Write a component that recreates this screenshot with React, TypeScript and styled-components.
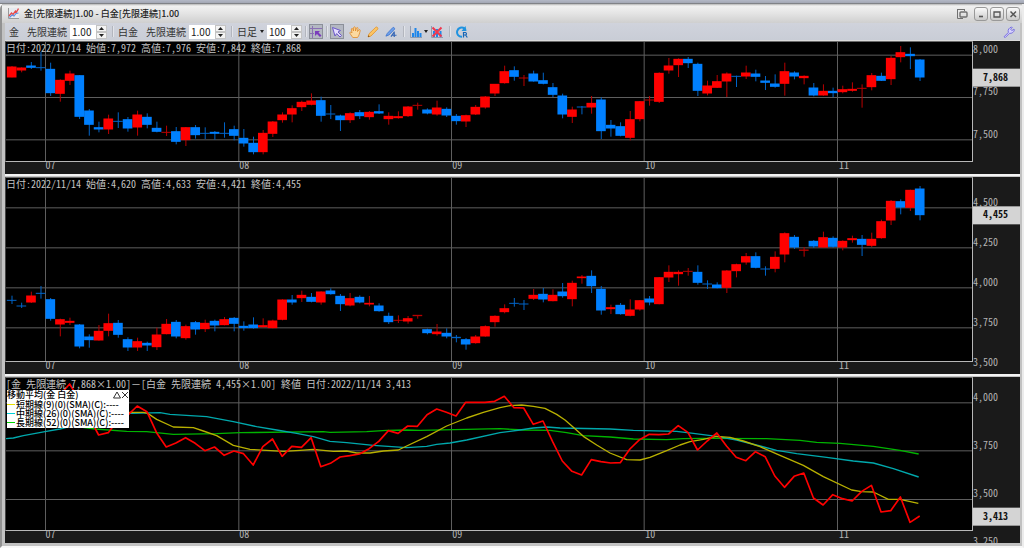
import React from "react";
import styled, { createGlobalStyle, css } from "styled-components";

const UI_FONT = `"Liberation Sans Narrow", "Noto Sans CJK JP", sans-serif`;
const MONO_FONT = `"Noto Sans Mono CJK JP", "Noto Sans CJK JP", monospace`;

const Global = createGlobalStyle`
  *, *::before, *::after { box-sizing: border-box; }
  body { margin: 0; background: #f4f4f4; font-family: ${UI_FONT}; font-size: 10px; color: #222; }
  button, input, select { font: inherit; color: inherit; }
`;

/* ---------- chart data ---------- */

type Candle = [up: 0 | 1, high: number, top: number, bottom: number, low: number];

const GOLD: Candle[] = [
  [1, 78, 80, 112, 112], [1, 82, 83, 91, 97], [0, 66, 77, 83, 87], [0, 36, 82, 84, 92], [0, 68, 87, 159, 168],
  [1, 118, 120, 161, 185], [1, 92, 101, 122, 135], [0, 105, 106, 230, 237], [0, 207, 212, 254, 287], [0, 245, 262, 268, 277],
  [1, 224, 236, 268, 282], [0, 217, 243, 245, 264], [0, 231, 238, 265, 275], [1, 212, 224, 262, 287], [0, 220, 231, 254, 265],
  [0, 245, 264, 275, 277], [1, 257, 276, 278, 288], [0, 261, 274, 305, 313], [1, 261, 262, 300, 318], [0, 255, 262, 285, 296],
  [0, 262, 279, 281, 297], [0, 273, 276, 281, 299], [0, 247, 279, 281, 293], [0, 257, 268, 287, 301], [0, 267, 294, 310, 320],
  [0, 290, 309, 336, 343], [1, 270, 279, 336, 343], [1, 243, 245, 281, 291], [1, 217, 224, 240, 248], [1, 196, 205, 223, 247],
  [1, 182, 186, 201, 213], [1, 160, 182, 194, 196], [0, 170, 181, 227, 245], [0, 195, 221, 223, 237], [0, 224, 227, 240, 273],
  [1, 217, 220, 240, 249], [0, 210, 217, 228, 237], [1, 213, 216, 231, 239], [0, 193, 214, 220, 222], [1, 217, 228, 237, 254],
  [1, 214, 229, 234, 236], [1, 198, 200, 228, 231], [1, 188, 195, 197, 209], [0, 205, 209, 220, 223], [1, 182, 203, 223, 227],
  [0, 202, 207, 226, 231], [0, 222, 228, 243, 254], [1, 224, 226, 244, 261], [1, 195, 201, 223, 225], [1, 168, 170, 202, 206],
  [1, 132, 132, 160, 168], [1, 77, 94, 129, 131], [0, 79, 91, 110, 122], [1, 105, 113, 115, 138], [0, 92, 101, 124, 125],
  [0, 98, 121, 131, 133], [0, 129, 142, 164, 171], [0, 161, 167, 223, 235], [1, 200, 209, 230, 249], [0, 198, 200, 202, 223],
  [1, 168, 189, 202, 221], [0, 172, 179, 273, 297], [0, 240, 255, 265, 290], [0, 247, 259, 287, 289], [1, 213, 238, 293, 301],
  [1, 183, 184, 237, 244], [1, 168, 179, 181, 197], [1, 97, 99, 185, 189], [1, 54, 77, 91, 101], [1, 55, 57, 75, 111],
  [0, 51, 57, 69, 84], [0, 68, 72, 152, 168], [1, 122, 137, 160, 166], [1, 105, 124, 143, 144], [1, 97, 101, 124, 171],
  [0, 107, 108, 110, 141], [1, 77, 98, 109, 117], [0, 89, 101, 110, 124], [0, 108, 122, 128, 150], [0, 103, 131, 140, 143],
  [1, 68, 94, 131, 167], [0, 94, 98, 109, 118], [1, 106, 108, 114, 133], [0, 129, 143, 166, 169], [1, 133, 153, 166, 167],
  [0, 143, 153, 159, 171], [1, 137, 148, 156, 160], [1, 127, 147, 152, 155], [1, 133, 144, 146, 203], [1, 99, 106, 141, 151],
  [0, 98, 108, 122, 123], [1, 48, 54, 117, 135], [1, 18, 37, 51, 67], [0, 22, 42, 48, 87], [0, 57, 59, 112, 123],
];

const PLATINUM: Candle[] = [
  [0, 362, 375, 377, 387], [0, 383, 392, 394, 399], [1, 350, 362, 382, 384], [0, 333, 354, 356, 371], [0, 369, 373, 431, 437],
  [1, 431, 433, 448, 484], [1, 428, 438, 443, 450], [0, 447, 449, 514, 520], [0, 478, 485, 495, 518], [1, 450, 468, 496, 497],
  [1, 416, 445, 467, 484], [0, 435, 444, 479, 488], [0, 487, 493, 517, 528], [1, 488, 499, 517, 528], [0, 500, 504, 511, 528],
  [1, 458, 479, 516, 525], [1, 432, 447, 477, 478], [0, 435, 441, 484, 490], [1, 449, 454, 489, 494], [0, 438, 442, 463, 479],
  [1, 434, 444, 462, 471], [0, 434, 438, 451, 469], [1, 426, 433, 450, 451], [0, 426, 429, 446, 469], [0, 439, 453, 459, 467],
  [0, 427, 449, 459, 461], [1, 430, 451, 456, 458], [1, 434, 437, 459, 460], [1, 373, 374, 434, 436], [0, 360, 374, 382, 389],
  [1, 347, 360, 369, 381], [0, 354, 366, 380, 382], [1, 349, 350, 382, 389], [0, 340, 347, 357, 359], [0, 357, 363, 387, 408],
  [1, 354, 370, 391, 394], [0, 361, 366, 382, 385], [1, 363, 384, 388, 394], [0, 385, 392, 408, 410], [0, 413, 423, 441, 447],
  [1, 421, 435, 437, 444], [1, 423, 430, 439, 446], [1, 420, 420, 423, 431], [0, 461, 463, 474, 478], [1, 447, 470, 477, 482],
  [0, 460, 474, 484, 490], [0, 480, 486, 489, 502], [0, 489, 493, 508, 524], [1, 480, 485, 504, 506], [1, 451, 454, 484, 485],
  [1, 421, 423, 441, 455], [1, 388, 400, 411, 415], [0, 369, 384, 386, 395], [0, 375, 386, 388, 405], [1, 342, 360, 371, 375],
  [0, 339, 357, 373, 382], [1, 343, 360, 378, 379], [0, 324, 350, 363, 368], [1, 317, 324, 372, 394], [1, 300, 305, 309, 326],
  [0, 286, 303, 333, 354], [0, 333, 342, 406, 419], [1, 389, 397, 402, 417], [0, 384, 390, 417, 419], [1, 373, 404, 422, 424],
  [1, 375, 376, 403, 407], [0, 363, 371, 382, 391], [1, 306, 307, 387, 388], [1, 271, 291, 307, 321], [1, 286, 291, 297, 332],
  [1, 279, 288, 290, 302], [0, 271, 291, 323, 329], [0, 316, 326, 328, 342], [0, 322, 329, 339, 340], [1, 285, 287, 338, 354],
  [1, 266, 268, 288, 307], [1, 234, 244, 262, 269], [0, 232, 244, 278, 280], [0, 274, 281, 283, 302], [1, 229, 246, 281, 292],
  [1, 172, 175, 238, 262], [0, 180, 186, 217, 222], [1, 216, 224, 227, 245], [0, 195, 198, 214, 219], [1, 170, 187, 217, 219],
  [0, 184, 189, 215, 218], [1, 196, 198, 217, 226], [1, 182, 190, 195, 203], [0, 180, 192, 209, 243], [1, 173, 192, 212, 216],
  [1, 134, 139, 189, 191], [1, 75, 78, 136, 150], [0, 73, 79, 97, 118], [1, 44, 45, 98, 108], [0, 33, 41, 120, 136],
];

/* Closing spread, one value per session starting at the sixth. */
const SPREAD_FROM = 5;
const SPREAD = [
  75, 42, 90, 140, 195, 188, 150, 136, 108, 125, 188, 231, 219, 203, 220, 242, 231, 256, 243, 251, 285, 230, 207, 259,
  229, 232, 203, 290, 280, 261, 257, 252, 236, 214, 182, 190, 168, 169, 134, 117, 127, 138, 97, 97, 97, 94, 79, 113,
  114, 163, 153, 215, 273, 304, 315, 269, 275, 279, 278, 237, 209, 193, 194, 192, 167, 187, 240, 213, 189, 228, 262,
  272, 245, 260, 318, 352, 319, 309, 384, 405, 374, 386, 393, 364, 346, 426, 422, 381, 457, 438,
];

const SMA_SHORT =
  "300,150 390,127 430,127 443,130 470,148 520,171 580,173 610,183 650,197 700,226 750,238 850,244 900,241 940,238 1000,244 1040,243 1070,249 1110,249 1150,243 1195,240 1220,228 1280,200 1340,168 1400,144 1450,127 1500,113 1530,107 1565,105 1600,109 1635,115 1670,133 1695,150 1720,172 1750,199 1790,225 1830,249 1880,269 1920,270 1950,262 2000,242 2040,225 2070,215 2110,208 2150,199 2190,202 2230,213 2280,230 2340,256 2410,286 2470,320 2555,360 2585,365 2620,366 2665,388 2700,388 2755,400";
const SMA_MIDDLE =
  "18,206 40,204 70,197 135,185 180,177 300,145 390,130 480,128 510,133 620,140 700,155 770,170 830,180 890,190 940,200 990,214 1040,218 1120,226 1220,233 1280,229 1310,223 1350,219 1400,210 1500,188 1560,180 1600,174 1640,171 1680,174 1830,177 1900,181 2030,184 2080,190 2150,199 2210,210 2280,228 2330,241 2390,251 2480,262 2560,273 2620,279 2680,296 2756,321";
const SMA_LONG =
  "200,165 285,177 380,184 440,185 520,193 650,191 720,188 970,185 990,187 1100,185 1160,181 1220,180 1260,181 1500,176 1570,180 1650,181 1700,188 1750,197 1830,201 1900,207 2000,209 2050,206 2110,205 2300,206 2400,211 2450,217 2520,220 2620,229 2700,241 2756,252";

const MONTHS = [
  { label: "07", x: 136 },
  { label: "08", x: 716 },
  { label: "09", x: 1354 },
  { label: "10", x: 1932 },
  { label: "11", x: 2512 },
];

/* Drawing space shared by the plots: three units to a pixel of the default window. */
const LEFT = 18;
const SPAN = 2898;
const UNIT = 3;
const FRAME = 14;
const center = (i: number) => 35 + i * 28.98;

/* ---------- window chrome ---------- */

const Desktop = styled.div`
  min-height: 100vh;
  display: flex;
  flex-direction: column;
  background: #f6f6f6;
`;

const BackStrip = styled.div`
  height: 4px;
  flex: none;
  background: linear-gradient(#b3b8c6, #a3a7b4);
  border-bottom: 1px solid #808287;
`;

const Window = styled.section`
  flex: 1;
  display: flex;
  flex-direction: column;
  border-left: 2px solid #929292;
  border-right: 2px solid #ececec;
  border-bottom: 2px solid #f8f8f8;
  border-top-left-radius: 5px;
`;

const TitleBar = styled.header`
  height: 19px;
  flex: none;
  display: flex;
  align-items: center;
  gap: 5px;
  padding: 0 2px 0 6px;
  background: linear-gradient(#b4b4b4 0, #f1f1f1 2px, #e4e4e4 50%, #cfcfcf);
`;

const Title = styled.h1`
  flex: 1;
  margin: 0;
  font-size: 9px;
  line-height: 16px;
  font-weight: 500;
  color: #222;
`;

const WindowButtons = styled.div`
  display: flex;
  gap: 2px;
`;

const WindowButton = styled.button<{ $flat?: boolean }>`
  width: 14px;
  height: 14px;
  padding: 0;
  display: grid;
  place-items: center;
  border-radius: 3px;
  border: 1px solid #999;
  background: linear-gradient(#fafafa, #cacaca);
  ${(p) =>
    p.$flat &&
    css`
      border-color: transparent;
      background: none;
      margin-right: 3px;
    `}
`;

const Body = styled.div`
  flex: 1;
  display: flex;
  flex-direction: column;
  border: solid #c2c2c2;
  border-width: 0 2px 3px 3px;
`;

const Toolbar = styled.div`
  height: 17px;
  flex: none;
  display: flex;
  align-items: center;
  padding: 0 4px;
  background: linear-gradient(#d0d3dc, #c9cdd6);
`;

const FieldLabel = styled.label`
  display: flex;
  align-items: center;
  gap: 8px;
  line-height: 16px;
  color: #333;
`;

const Spinner = styled.div`
  display: flex;
  height: 14px;
  margin-left: 3px;
`;

const SpinInput = styled.input<{ $narrow?: boolean }>`
  width: ${(p) => (p.$narrow ? 24 : 26)}px;
  padding: 0 2px;
  border: 0;
  background: #fff;
  line-height: 14px;
`;

const SpinButtons = styled.div`
  display: flex;
  flex-direction: column;
  width: 11px;
`;

const SpinButton = styled.button`
  flex: 1;
  padding: 0;
  display: grid;
  place-items: center;
  border: 1px solid #c4c4c4;
  background: #f3f3f3;
  min-height: 0;
`;

const Separator = styled.span<{ $tight?: boolean }>`
  width: 1px;
  height: 11px;
  margin: 0 ${(p) => (p.$tight ? 3 : 5)}px;
  background: #b3b6be;
  box-shadow: 1px 0 #e2e4e9;
`;

const PeriodPicker = styled.span`
  display: grid;
  align-items: center;
  width: 27px;

  > * {
    grid-area: 1 / 1;
  }
  > svg {
    justify-self: end;
    pointer-events: none;
  }
`;

const PeriodSelect = styled.select`
  appearance: none;
  width: 100%;
  padding: 0;
  border: 0;
  background: none;
  color: #333;
  line-height: 16px;
`;

const ToolButton = styled.button<{ $pressed?: boolean; $wide?: boolean }>`
  height: 15px;
  width: ${(p) => (p.$wide ? 20 : 14)}px;
  padding: 0;
  display: flex;
  align-items: center;
  justify-content: center;
  gap: 2px;
  border: 1px solid ${(p) => (p.$pressed ? "#8c9099" : "transparent")};
  background: ${(p) => (p.$pressed ? "#b4b8c2" : "none")};
`;

const Tools = styled.div<{ $gap: number }>`
  display: flex;
  gap: ${(p) => p.$gap}px;
`;

const Spacer = styled.span`
  flex: 1;
`;

/* ---------- chart panes ---------- */

const Panes = styled.main`
  flex: 1;
  display: flex;
  flex-direction: column;
  gap: 3px;
  border-top: 1px solid #dcdcdc;
  background: #c4c4c4;
`;

const Pane = styled.section<{ $weight: number }>`
  flex: ${(p) => p.$weight} 1 0;
  min-height: 90px;
  display: grid;
  grid-template-columns: 1fr 47px;
  grid-template-rows: 1fr 12px;
  background: #1a1a1a;
  box-shadow: 0 2px #f4f4f4;

  &:last-child {
    box-shadow: none;
  }
`;

const Plot = styled.div`
  display: grid;
  min-height: 0;
  border: solid #b8b8b8;
  border-width: 1px 1px 1px 0;
  border-top-color: #6a6a6a;
  border-left: 1px solid #444;
  background: #000;

  > * {
    grid-area: 1 / 1;
  }
`;

const Drawing = styled.svg`
  display: block;
  width: 100%;
  height: 100%;
  min-height: 0;
`;

const AxisX = styled.svg`
  grid-column: 1;
  grid-row: 2;
  width: 100%;
  height: 12px;
  overflow: visible;
`;

const AxisY = styled.svg`
  grid-column: 2;
  grid-row: 1 / 3;
  width: 47px;
  height: 100%;
  min-height: 0;
`;

const AxisText = styled.text`
  font: 10px ${MONO_FONT};
  fill: #b4b4b4;
`;

const TagText = styled.text`
  font: bold 10px ${MONO_FONT};
  fill: #111;
`;

const Overlay = styled.div`
  z-index: 1;
  align-self: start;
  justify-self: start;
`;

const Readout = styled.p`
  margin: 0;
  font: 10px/12px ${MONO_FONT};
  color: #c4c4c4;
  white-space: pre;
`;

const Legend = styled.div`
  width: 122px;
  margin-left: 1px;
  background: #fff;
  color: #000;
  font: 500 9px/9px "Noto Sans CJK JP", sans-serif;
  padding-bottom: 1px;
`;

const LegendHead = styled.div`
  display: flex;
  justify-content: space-between;
  line-height: 10px;
`;

const LegendTools = styled.span`
  display: flex;
`;

const LegendButton = styled.button`
  width: 8px;
  height: 9px;
  padding: 0;
  display: grid;
  place-items: center;
  border: 0;
  background: none;
`;

const LegendRow = styled.div<{ $color: string }>`
  display: flex;
  align-items: center;
  gap: 1px;
  white-space: nowrap;

  &::before {
    content: "";
    width: 8px;
    height: 1px;
    background: ${(p) => p.$color};
  }
`;

const Caret = ({ up, size = 5 }: { up?: boolean; size?: number }) => (
  <svg width={size} height={3} viewBox="0 0 6 3" preserveAspectRatio="none" aria-hidden="true">
    <path d={up ? "M0 3L3 0L6 3Z" : "M0 0L3 3L6 0Z"} fill="#222" />
  </svg>
);

function NumberSpinner({ id, value, narrow }: { id: string; value: string; narrow?: boolean }) {
  return (
    <Spinner>
      <SpinInput id={id} $narrow={narrow} defaultValue={value} aria-label={narrow ? "本数" : undefined} />
      <SpinButtons>
        <SpinButton aria-label="増やす"><Caret up /></SpinButton>
        <SpinButton aria-label="減らす"><Caret /></SpinButton>
      </SpinButtons>
    </Spinner>
  );
}

function Grid({ rows, y, h }: { rows: number[]; y: number; h: number }) {
  return (
    <g stroke="#5e5e5e" strokeWidth={3}>
      {rows.map((r) => <line key={r} x1={LEFT} x2={LEFT + SPAN} y1={r + 0.5} y2={r + 0.5} />)}
      {MONTHS.map((m) => <line key={m.x} x1={m.x + 0.5} x2={m.x + 0.5} y1={y} y2={y + h} />)}
    </g>
  );
}

function Candles({ data }: { data: Candle[] }) {
  return (
    <g>
      {data.map(([up, high, top, bottom, low], i) => {
        const x = center(i);
        const thin = bottom - top < 4;
        const fill = up ? "#ff0000" : "#0080ff";
        const soft = up ? "#b80000" : "#0064c8";
        return (
          <g key={i}>
            <rect x={x - 0.5} y={high} width={3} height={low - high} fill={soft} />
            <rect x={x - 14.5} y={top - 0.5} width={29} height={Math.max(3, bottom - top + 1)} fill={thin ? soft : fill} />
          </g>
        );
      })}
    </g>
  );
}

interface PaneProps {
  weight: number;
  y: number;
  grid: number[];
  ticks: string[];
  last: string;
  lastY: number;
  readout: string;
  legend?: React.ReactNode;
  children: React.ReactNode;
}

function ChartPane({ weight, y, grid, ticks, last, lastY, readout, legend, children }: PaneProps) {
  const h = (weight - FRAME) * UNIT;
  const step = grid[1] - grid[0];
  const percent = (v: number) => `${(((v - y) / UNIT + 1) / weight) * 100}%`;
  return (
    <Pane $weight={weight}>
      <Plot>
        <Drawing viewBox={`${LEFT} ${y} ${SPAN} ${h}`} preserveAspectRatio="none">
          <Grid rows={grid} y={y} h={h} />
          {children}
        </Drawing>
        <Overlay>
          <Readout>{readout}</Readout>
          {legend}
        </Overlay>
      </Plot>
      <AxisX>
        {MONTHS.map((m) => (
          <AxisText key={m.label} x={`${((m.x - LEFT) / SPAN) * 100}%`} dx={1} y={7}>{m.label}</AxisText>
        ))}
      </AxisX>
      <AxisY>
        {ticks.map((t, i) => (
          <AxisText key={t} x={0} y={percent(grid[0] + step * i)} dy={-2}>{t}</AxisText>
        ))}
        <svg y={percent(lastY)} overflow="visible">
          <rect y={-9} width={47} height={18} fill="#d4d4d4" />
          <TagText x={10} y={3}>{last}</TagText>
        </svg>
      </AxisY>
    </Pane>
  );
}

const spreadPoints = SPREAD.map((v, i) => `${center(i + SPREAD_FROM)},${v}`).join(" ");

export default function App() {
  return (
    <Desktop>
      <Global />
      <BackStrip />
      <Window>
        <TitleBar>
          <svg width="11" height="11" viewBox="0 0 11 11" aria-hidden="true">
            <rect width="11" height="11" fill="#e6e9ee" />
            <path d="M.5 0V10.500H11" fill="none" stroke="#999" />
            <path d="M1 8L3.500 5L5 6.500L7.500 3L8.500 4L10.500 .5" fill="none" stroke="#e84848" strokeWidth="1.300" />
            <path d="M1.500 9.500L4 7L6 8L8 5.500L10.500 5" fill="none" stroke="#5a8ee0" strokeWidth="1.100" />
          </svg>
          <Title>金[先限連続]1.00 - 白金[先限連続]1.00</Title>
          <WindowButtons>
            <WindowButton $flat aria-label="切り離し">
              <svg width="12" height="12" viewBox="0 0 12 12" fill="none" stroke="#707070">
                <path d="M8.500 3V1.500H1.500V10.500H4" />
                <path d="M1 1.500H9M2 10.500H7" />
                <rect x="4" y="4" width="7" height="5" rx="1" strokeWidth="1.400" />
              </svg>
            </WindowButton>
            <WindowButton aria-label="最小化">
              <svg width="10" height="10"><path d="M3 7.500H7" stroke="#555" strokeWidth="1.600" /></svg>
            </WindowButton>
            <WindowButton aria-label="最大化">
              <svg width="10" height="10"><path d="M2 3H8V8H2Z" fill="none" stroke="#555" strokeWidth="1.300" /></svg>
            </WindowButton>
            <WindowButton aria-label="閉じる">
              <svg width="10" height="10"><path d="M2.500 2.500L8 8M8 2.500L2.500 8" stroke="#555" strokeWidth="1.500" /></svg>
            </WindowButton>
          </WindowButtons>
        </TitleBar>
        <Body>
          <Toolbar>
            <FieldLabel htmlFor="gold"><span>金</span><span>先限連続</span></FieldLabel>
            <NumberSpinner id="gold" value="1.00" />
            <Separator />
            <FieldLabel htmlFor="platinum"><span>白金</span><span>先限連続</span></FieldLabel>
            <NumberSpinner id="platinum" value="1.00" />
            <Separator />
            <PeriodPicker>
              <PeriodSelect aria-label="足種" defaultValue="日足">
                <option>日足</option>
                <option>週足</option>
                <option>月足</option>
              </PeriodSelect>
              <Caret size={4} />
            </PeriodPicker>
            <NumberSpinner id="bars" value="100" narrow />
            <Separator $tight />
            <ToolButton $pressed aria-label="クロスライン">
              <svg width="12" height="12" viewBox="0 0 12 12">
                <path d="M0 2.500H12M2.500 0V12M0 7.500H4" stroke="#8a70b4" fill="none" />
                <path d="M5 5H10L8.500 6.500L11.500 9.500L10 11L7 8L5 10Z" fill="#7a3cbc" />
              </svg>
            </ToolButton>
            <Separator $tight />
            <Tools $gap={4}>
              <ToolButton $pressed aria-label="選択">
                <svg width="12" height="12" viewBox="0 0 12 12">
                  <path d="M1.500 1.500L9.500 4.500L7 6L10.500 9.500L9 11L5.700 7.600L4 10Z" fill="#e4dcff" stroke="#6a58c8" />
                </svg>
              </ToolButton>
              <ToolButton aria-label="移動">
                <svg width="12" height="12" viewBox="0 0 12 12">
                  <path
                    d="M3.800 11.500C2.500 9.500 1 8 .8 6.600C1.400 5.800 2.500 6.300 3 7L2.300 3C2.600 2.200 3.500 2.200 3.800 3L4.500 5L4.600 1.500C5 .6 6 .6 6.300 1.500L6.500 5L7.500 1.900C8 1.100 9 1.400 9 2.300L8.500 5.500L10 3.800C10.700 3.300 11.400 3.900 11.200 4.700C10.500 7 10.300 9.500 8.500 11.500Z"
                    fill="#fbd9a0" stroke="#e08a28" strokeWidth=".8"
                  />
                </svg>
              </ToolButton>
              <ToolButton aria-label="描画">
                <svg width="12" height="12" viewBox="0 0 12 12">
                  <path d="M1 11L2 7.800L8.800 1.200C9.800.4 11.500 2 10.700 3.200L4 10Z" fill="#fcc463" stroke="#e09a3c" strokeWidth=".9" />
                  <path d="M1 11L1.500 9.300L2.700 10.500Z" fill="#704010" />
                </svg>
              </ToolButton>
              <ToolButton aria-label="線種">
                <svg width="12" height="12" viewBox="0 0 13 12">
                  <path d="M1 10.500L2.500 7.500L8.500 1.200C9.500.6 10.800 1.800 10.300 3L4.200 9.300Z" fill="#6ea0ea" stroke="#3a72cd" strokeWidth=".9" />
                  <path d="M10 5.500V11.500M6.500 11L10 6M7.500 9.500H12.500" stroke="#3566b5" strokeWidth="1.300" fill="none" />
                </svg>
              </ToolButton>
            </Tools>
            <Separator />
            <Tools $gap={1}>
              <ToolButton $wide aria-label="テクニカル">
                <svg width="12" height="12" viewBox="0 0 12 12">
                  <path d="M.5 0V11.500H12" stroke="#909cb0" fill="none" />
                  <path d="M2 7H4V11H2ZM4.500 2H6.500V11H4.500ZM7 5H9V11H7ZM9.500 7H11.500V11H9.500Z" fill="#1e86ea" />
                </svg>
                <Caret size={4} />
              </ToolButton>
              <ToolButton aria-label="テクニカル消去">
                <svg width="12" height="12" viewBox="0 0 12 12">
                  <path d="M.5 0V11.500H12" stroke="#909cb0" fill="none" />
                  <path d="M2 5H4V11H2ZM5 3H7V11H5ZM8.500 5H10.500V11H8.500Z" fill="#1e86ea" />
                  <path d="M1.500 1.500L10.500 10.500M10.500 1.500L1.500 10.500" stroke="#ee3a50" strokeWidth="2" />
                </svg>
              </ToolButton>
            </Tools>
            <Separator />
            <ToolButton aria-label="更新">
              <svg width="12" height="12" viewBox="0 0 12 12" fill="none">
                <path d="M6 10.800A4.600 4.600 0 1 1 8.500 2.600" stroke="#1f93e0" strokeWidth="2" />
                <path d="M5.500 5L10.500 5L9.500 0Z" fill="#1f93e0" />
                <path d="M7.500 11.500V6.500H9.500A1.300 1.300 0 0 1 9.500 9H7.500M9.600 9L11.300 11.500" stroke="#1565b5" strokeWidth="1.200" />
              </svg>
            </ToolButton>
            <Spacer />
            <ToolButton aria-label="設定">
              <svg width="12" height="12" viewBox="0 0 12 12">
                <path
                  d="M1 10.800L5.300 6.500C4.600 3.800 6 1.500 8.800 1L9.200 1.500L7.600 3.200L8.800 4.600L10.900 3.200L11.400 3.600C11 6.300 8.800 7.700 6.500 7.300L2.300 11.500Z"
                  fill="#d9d4ff" stroke="#6f68dd" strokeWidth=".9"
                />
              </svg>
            </ToolButton>
          </Toolbar>
          <Panes>
            <ChartPane
              weight={133} y={6} grid={[45, 172, 299]} ticks={["8,000", "7,750", "7,500"]}
              last="7,868" lastY={113}
              readout="日付:2022/11/14 始値:7,972 高値:7,976 安値:7,842 終値:7,868"
            >
              <Candles data={GOLD} />
            </ChartPane>
            <ChartPane
              weight={197} y={9} grid={[98, 218, 338, 458]} ticks={["4,500", "4,250", "4,000", "3,750", "3,500"]}
              last="4,455" lastY={121}
              readout="日付:2022/11/14 始値:4,620 高値:4,633 安値:4,421 終値:4,455"
            >
              <Candles data={PLATINUM} />
            </ChartPane>
            <ChartPane
              weight={166} y={24} grid={[98, 242, 388]} ticks={["4,000", "3,750", "3,500", "3,250"]}
              last="3,413" lastY={440}
              readout="[金 先限連続 7,868×1.00]－[白金 先限連続 4,455×1.00] 終値 日付:2022/11/14 3,413"
              legend={
                <Legend>
                  <LegendHead>
                    <span>移動平均(金 白金)</span>
                    <LegendTools>
                      <LegendButton aria-label="たたむ">
                        <svg width="8" height="8"><path d="M.5 7L4 1L7.500 7Z" fill="none" stroke="#333" /></svg>
                      </LegendButton>
                      <LegendButton aria-label="閉じる">
                        <svg width="8" height="8"><path d="M1 1L7 7M7 1L1 7" stroke="#333" /></svg>
                      </LegendButton>
                    </LegendTools>
                  </LegendHead>
                  <LegendRow $color="#e8e000">短期線(9)(0)(SMA)(C):----</LegendRow>
                  <LegendRow $color="#00d0d8">中期線(26)(0)(SMA)(C):----</LegendRow>
                  <LegendRow $color="#00d800">長期線(52)(0)(SMA)(C):----</LegendRow>
                </Legend>
              }
            >
              <g fill="none" strokeWidth={4} strokeLinejoin="round">
                <polyline points={SMA_LONG} stroke="#00b400" />
                <polyline points={SMA_MIDDLE} stroke="#00a8ac" />
                <polyline points={SMA_SHORT} stroke="#b8b000" />
                <polyline points={spreadPoints} stroke="#ff0000" strokeWidth={5} />
              </g>
            </ChartPane>
          </Panes>
        </Body>
      </Window>
    </Desktop>
  );
}
